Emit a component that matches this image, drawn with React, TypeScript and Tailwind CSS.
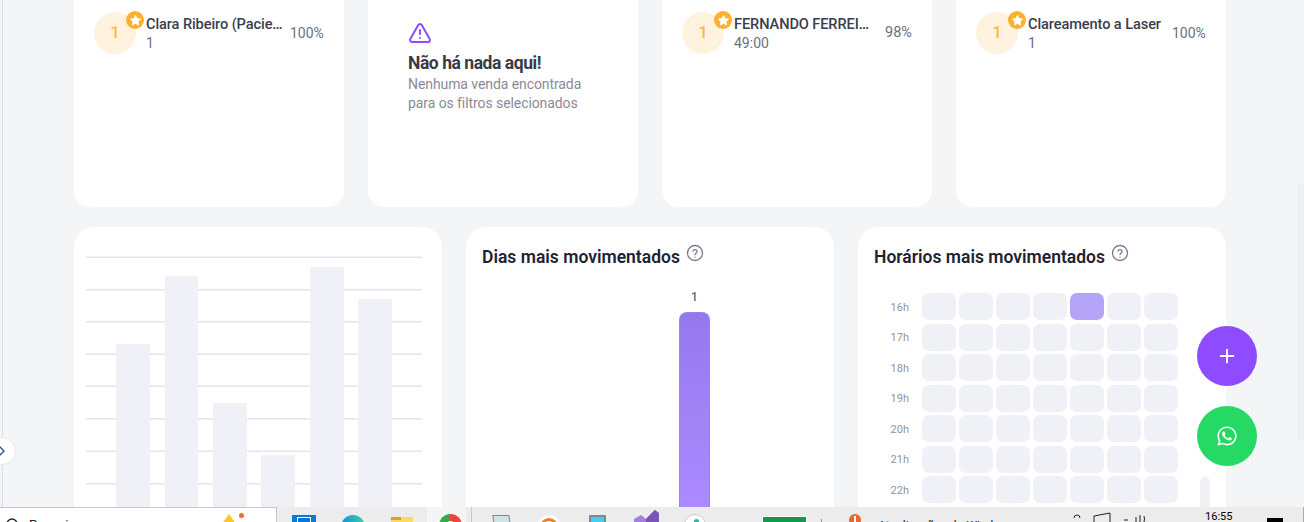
import { ChevronRight, Plus, TriangleAlert } from 'lucide-react'
import { FaWhatsapp } from 'react-icons/fa'

// Cartões do topo com o primeiro lugar do ranking
function RankCard({ name, sub, pct, wide }: { name: string; sub: string; pct: string; wide?: boolean }) {
  return (
    <div className="h-[207px] rounded-b-2xl bg-white pl-5 pt-3">
      <div className="flex items-center">
        <div className="relative flex h-[42px] w-[42px] shrink-0 items-center justify-center rounded-full bg-[#fff3e0] text-[17px] font-medium text-[#ffb74d]">
          1
          <span className="absolute -top-[1px] left-[32px] flex h-[18px] w-[18px] items-center justify-center rounded-full bg-[#ffb02e]">
            <svg viewBox="0 0 24 24" className="h-[13px] w-[13px]" fill="#fff">
              <path d="M12 2.5l2.9 6 6.6.9-4.8 4.6 1.2 6.5L12 17.4l-5.9 3.1 1.2-6.5L2.5 9.4l6.6-.9z" stroke="#fff" strokeWidth="1.5" strokeLinejoin="round" />
            </svg>
          </span>
        </div>
        <div className="ml-[10px] w-[138px] min-w-0 shrink-0">
          <p className="-mt-[1px] truncate text-[14.6px] leading-[20px] font-medium tracking-[-0.1px] text-[#3b3d4d]">{name}</p>
          <p className="text-[14px] leading-[18px] text-[#6b7080]">{sub}</p>
        </div>
        <span className={wide ? 'ml-[13px] text-[14.5px] text-[#6b7080]' : 'ml-[6px] text-[14px] text-[#6b7080]'}>{pct}</span>
      </div>
    </div>
  )
}

function EmptyCard() {
  return (
    <div className="h-[207px] rounded-b-2xl bg-white pl-10 pt-[21px]">
      <TriangleAlert className="h-6 w-6 text-[#8f4bff]" strokeWidth={2} />
      <h3 className="mt-[6px] text-[17.5px] leading-[24px] font-bold tracking-[-0.45px] text-[#3a3a46]">Não há nada aqui!</h3>
      <p className="text-[14px] leading-[19px] tracking-[-0.08px] text-[#8a8a98]">
        Nenhuma venda encontrada
        <br />
        para os filtros selecionados
      </p>
    </div>
  )
}

function CardTitle({ children }: { children: string }) {
  return (
    <div className="flex items-start">
      <h3 className="text-[17.5px] leading-[24px] font-semibold text-[#1f2233]">{children}</h3>
      <svg viewBox="0 0 24 24" className="mt-[-1px] ml-[6px] h-[18px] w-[18px]" fill="none" stroke="#7a7a90" strokeWidth="1.7" strokeLinecap="round">
        <circle cx="12" cy="12" r="10" />
        <path d="M9.2 9.4a2.9 2.9 0 0 1 5.6.9c0 1.9-2.8 2.4-2.8 4" />
        <path d="M12 17.6h.01" />
      </svg>
    </div>
  )
}

const skeletonLines = [257, 289.5, 321.5, 354, 386, 418.5, 451, 483.5]
const skeletonBars = [
  { x: 116, w: 34, top: 344 },
  { x: 165, w: 33, top: 276 },
  { x: 213, w: 34, top: 403 },
  { x: 261, w: 34, top: 455 },
  { x: 310, w: 34, top: 267 },
  { x: 358, w: 34, top: 299 },
]

function SkeletonCard() {
  return (
    <div className="rounded-t-[20px] bg-white pt-[29px] pl-3">
      <svg width="336" height="251" viewBox="86 256 336 251" className="block">
        {skeletonLines.map((y) => (
          <rect key={y} x="86" y={y - 0.5} width="336" height="1.5" fill="#e4e4ec" />
        ))}
        {skeletonBars.map((b) => (
          <rect key={b.x} x={b.x} y={b.top} width={b.w} height={507 - b.top} fill="#f0f1f6" />
        ))}
      </svg>
    </div>
  )
}

function DaysCard() {
  return (
    <div className="rounded-t-[20px] bg-white px-4 pt-[18px]">
      <CardTitle>Dias mais movimentados</CardTitle>
      <div className="mt-[20px] ml-[197px] w-[31px]">
        <p className="text-center text-[12px] leading-[16px] font-medium text-[#4f6a8f]">1</p>
        <div className="mt-[7px] h-[200px] rounded-t-[8px] border-x border-t border-[#9a80f5] bg-gradient-to-b from-[#9478ec] via-[#a183f6] to-[#ab8bff]" />
      </div>
    </div>
  )
}

const hours = ['16h', '17h', '18h', '19h', '20h', '21h', '22h']
const days = [0, 1, 2, 3, 4, 5, 6]

function HoursCard() {
  return (
    <div className="rounded-t-[20px] bg-white px-4 pt-[18px]">
      <CardTitle>Horários mais movimentados</CardTitle>
      <div className="mt-[24px] flex flex-col gap-[3.5px]">
        {hours.map((h, row) => (
          <div key={h} className="flex h-[27px] items-center">
            <span className="w-[35px] pt-[3px] text-right text-[11px] text-[#9a8f98]">{h}</span>
            <div className="ml-[13px] grid grid-cols-7 gap-[3px]">
              {days.map((d) => (
                <div
                  key={d}
                  className={row === 0 && d === 4 ? 'h-[27px] w-[34px] rounded-[7px] bg-[#b4a4f8]' : 'h-[27px] w-[34px] rounded-[7px] bg-[#f0f1f6]'}
                />
              ))}
            </div>
          </div>
        ))}
      </div>
    </div>
  )
}

// Barra de tarefas do Windows, quase toda cortada pela janela
function Taskbar() {
  return (
    <div className="flex h-[15px] shrink-0 overflow-hidden bg-[#ececec] text-black">
      <div className="flex h-[16px] w-[277px] shrink-0 items-start border-t border-r border-[#c8c8c8] bg-white">
        <svg width="14" height="14" viewBox="0 0 14 14" className="mt-[9px] ml-[5px] shrink-0" fill="none" stroke="#222" strokeWidth="1.3">
          <circle cx="7" cy="7" r="5" />
        </svg>
        <span className="mt-[9px] ml-[10px] w-[60px] shrink-0 text-[13px] leading-[16px] text-[#222]">Pesquisar</span>
        <svg width="14" height="10" viewBox="0 0 14 10" className="mt-[6px] ml-[133px] shrink-0">
          <path d="M7 0l7 10H0z" fill="#ffc820" />
        </svg>
        <span className="mt-[5px] ml-[3px] h-[5px] w-[5px] shrink-0 rounded-full bg-[#f26a2e]" />
      </div>
      <div className="mt-[8px] ml-[15px] h-[10px] w-[24px] bg-[#0a78d4]">
        <div className="mt-[2px] ml-[5px] h-[8px] w-[14px] border border-white" />
      </div>
      <div className="mt-[8px] ml-[25px] h-[24px] w-[24px] rounded-full bg-gradient-to-r from-[#1b8fd8] to-[#3fd0a0]" />
      <div className="mt-[10px] ml-[26px] h-[10px] w-[22px] bg-[#ffd76a]">
        <div className="h-[3px] w-[10px] bg-[#d9a21b]" />
      </div>
      <div className="ml-[14px] w-[39px] bg-[#f5f5f5] pt-[7px] pl-[12px]">
        <div className="h-[23px] w-[23px] rounded-full bg-[conic-gradient(#e8453c_0_33%,#fbbc05_33%_66%,#34a853_66%_100%)] p-[7px]">
          <div className="h-[9px] w-[9px] rounded-full border-2 border-white bg-[#4285f4]" />
        </div>
      </div>
      <div className="ml-[5px] h-[15px] w-[1px] bg-[#c9c9c9]" />
      <div className="ml-[21px] mt-[8px] h-[10px] w-[17px] skew-x-[8deg] border border-[#888] bg-[#cfe3e8]" />
      <div className="ml-[27px] mt-[8px] h-[24px] w-[24px] rounded-full border-[3px] border-white bg-white">
        <div className="h-[18px] w-[18px] rounded-full border-[3px] border-[#ef7d22]" />
      </div>
      <div className="ml-[28px] mt-[8px] h-[10px] w-[18px] rounded-t-[1px] bg-[#7d8894] p-[2px]">
        <div className="h-[5px] bg-[#46cdf0]" />
      </div>
      <svg width="25" height="15" viewBox="0 0 25 15" className="ml-[28px]">
        <path d="M0 12l7-4 5 4 9-9 4 3v9H0z" fill="#a57fdb" />
        <path d="M12 12l9-9 4 3v9H12z" fill="#7a55b8" />
      </svg>
      <div className="ml-[25px] mt-[7px] h-[22px] w-[22px] rounded-full border border-[#ccc] bg-white pt-[4px] pl-[9px]">
        <div className="h-[5px] w-[5px] rounded-full bg-[#27b8a8]" />
      </div>
      <div className="ml-[56px] mt-[9px] h-[10px] w-[45px] border-x border-t border-white bg-[#15974d]" />
      <div className="ml-[14px] mt-[12px] h-[5px] w-[1px] bg-[#999]" />
      <div className="ml-[27px] mt-[7px] flex h-[12px] w-[12px] justify-center rounded-full bg-[#e8662a]">
        <div className="mt-[2px] h-[6px] w-[2px] bg-white" />
      </div>
      <span className="mt-[11px] ml-[17px] w-[190px] shrink-0 text-[12px] leading-[16px] whitespace-nowrap text-[#222]">Atualizações do Windows</span>
      <svg width="80" height="15" viewBox="0 0 80 15" className="shrink-0" fill="none" stroke="#222" strokeWidth="1">
        <path d="M6 11q0-3 3-3t3 3" />
        <path d="M26 9l16-3v9" />
        <path d="M26 9v6" />
        <path d="M56 13h4" />
        <path d="M68 10v5M72 8v7M76 9q1 3 0 6" />
      </svg>
      <div className="ml-[57px] w-[28px] shrink-0 pt-[2px] text-[11px] leading-[16px] text-black">16:55</div>
      <div className="mt-[11px] ml-[34px] h-[12px] w-[16px] shrink-0 bg-black" />
      <div className="ml-[20px] h-[15px] w-[1px] shrink-0 bg-[#aaa]" />
    </div>
  )
}

export default function App() {
  return (
    <div className="relative flex h-[522px] w-[1304px] flex-col overflow-hidden bg-[#f4f5f7] [font-family:Roboto,sans-serif]">
      <div className="absolute top-0 bottom-[15px] left-[2px] w-[1px] bg-[#dcdde2]" />

      <main className="min-h-0 flex-1 overflow-hidden pr-[78px] pl-[74px]">
        <div className="grid grid-cols-4 gap-6">
          <RankCard name="Clara Ribeiro (Paciente)" sub="1" pct="100%" />
          <EmptyCard />
          <RankCard name="FERNANDO FERREIRA" sub="49:00" pct="98%" wide />
          <RankCard name="Clareamento a Laser" sub="1" pct="100%" />
        </div>
        <div className="mt-5 grid h-[300px] grid-cols-3 gap-6">
          <SkeletonCard />
          <DaysCard />
          <HoursCard />
        </div>
      </main>

      <Taskbar />

      {/* scrollbars da janela e do painel */}
      <div className="absolute top-[183px] right-0 h-[257px] w-[7px] rounded-bl-[4px] bg-[#eeeff2]" />
      <div className="absolute top-[477px] left-[1200px] h-[30px] w-[10px] rounded-t-[5px] bg-[#f0f1f4]" />

      {/* botão de recolher o menu */}
      <button className="absolute top-[437px] -left-[12px] flex h-[28px] w-[28px] items-center justify-end rounded-full border border-[#e8e8ec] bg-white pr-[5px] text-[#33507a]">
        <ChevronRight className="h-[16px] w-[16px]" strokeWidth={2} />
      </button>

      {/* botões flutuantes */}
      <button className="absolute top-[326px] left-[1197px] flex h-[60px] w-[60px] items-center justify-center rounded-full bg-[#8f4bff] text-white">
        <Plus className="h-[22px] w-[22px]" strokeWidth={2} />
      </button>
      <button className="absolute top-[406px] left-[1197px] flex h-[60px] w-[60px] items-center justify-center rounded-full bg-[#25d964] text-white">
        <FaWhatsapp className="h-[22px] w-[22px]" />
      </button>
    </div>
  )
}
